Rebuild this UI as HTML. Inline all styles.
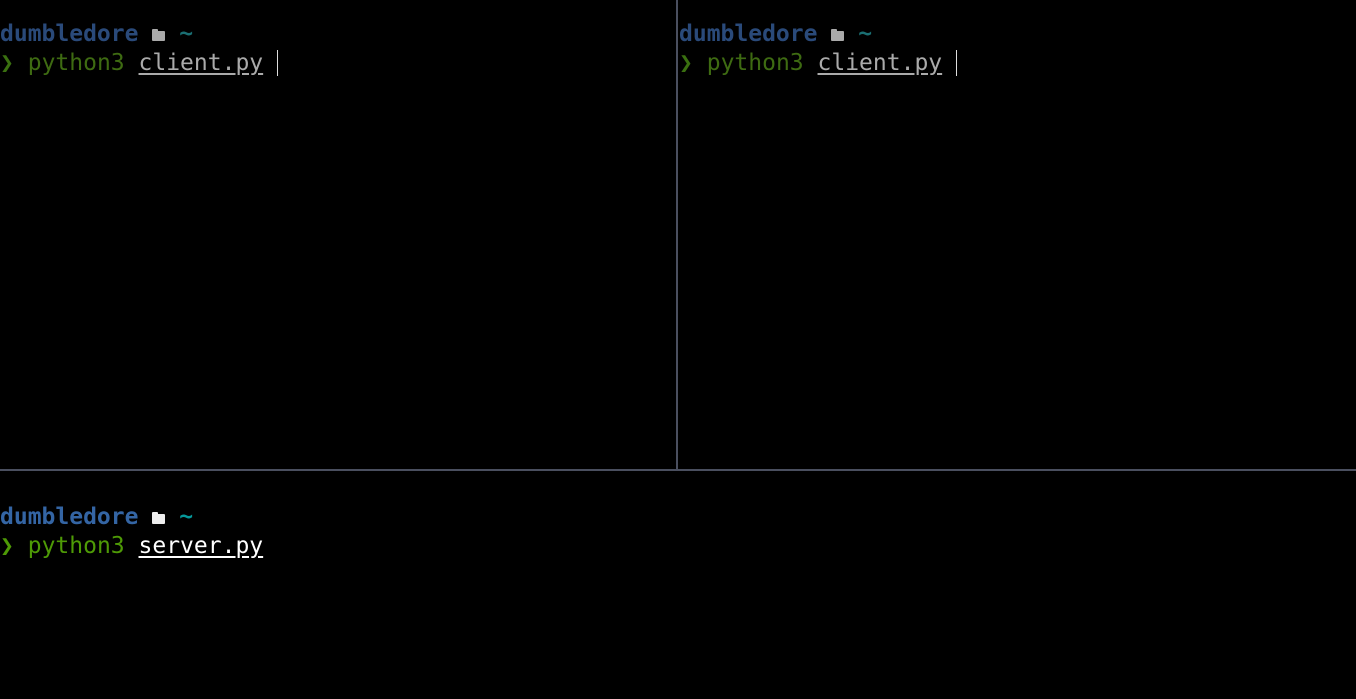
<!DOCTYPE html><html><head><style>
body{margin:0;width:1356px;height:699px;background:#000;overflow:hidden;position:relative;font-family:"DejaVu Sans Mono","Liberation Mono",monospace;font-size:23px;}
.p{position:absolute;line-height:29px}
.l{height:29px;position:relative;white-space:pre}
.b{font-weight:bold}
.f{display:inline-block;width:13px;height:10px;border-radius:1px;vertical-align:0px;position:relative}
.f:before{content:"";position:absolute;left:0;top:-2px;width:6px;height:3px;background:inherit;border-radius:1px 1px 0 0}
.u{text-decoration:underline;text-underline-offset:3px}
.cur{display:inline-block;width:1px;height:26px;background:#ddd;vertical-align:-6px;margin-left:14px}
</style></head><body>
<div style="position:absolute;left:676px;top:0;width:2px;height:470px;background:#4a4f5f"></div>
<div style="position:absolute;left:0;top:469px;width:1356px;height:2px;background:#4a4f5f"></div>
<div class="p" style="left:0;top:20px"><div class="l"><span class="b" style="color:#2a4a7a">dumbledore</span> <span class="f" style="background:#aaa"></span> <span class="b" style="color:#1a6e72">~</span></div><div class="l"><span style="color:#3a7010">❯</span> <span style="color:#3e6b12">python3</span> <span class="u" style="color:#aaa">client.py</span><span class="cur"></span></div></div>
<div class="p" style="left:679px;top:20px"><div class="l"><span class="b" style="color:#2a4a7a">dumbledore</span> <span class="f" style="background:#aaa"></span> <span class="b" style="color:#1a6e72">~</span></div><div class="l"><span style="color:#3a7010">❯</span> <span style="color:#3e6b12">python3</span> <span class="u" style="color:#aaa">client.py</span><span class="cur"></span></div></div>
<div class="p" style="left:0;top:503px"><div class="l"><span class="b" style="color:#3465a4">dumbledore</span> <span class="f" style="background:#eee"></span> <span class="b" style="color:#06989a">~</span></div><div class="l"><span style="color:#4e9a06">❯</span> <span style="color:#4e9a06">python3</span> <span class="u" style="color:#fff">server.py</span></div></div>
</body></html>
